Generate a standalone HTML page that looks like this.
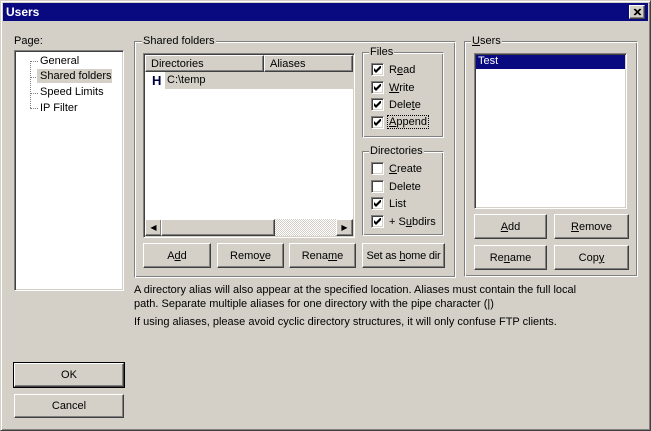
<!DOCTYPE html>
<html><head><style>
*{box-sizing:border-box;margin:0;padding:0}
body{width:651px;height:431px;background:#d4d0c8;font:11px "Liberation Sans",sans-serif;color:#000;position:relative;overflow:hidden}
.a{position:absolute}
.win{left:0;top:0;width:651px;height:431px;border:1px solid;border-color:#d4d0c8 #404040 #404040 #d4d0c8;box-shadow:inset 1px 1px #fff,inset -1px -1px #808080}
.title{left:3px;top:3px;width:645px;height:18px;background:#0a0a80;color:#fff;font-weight:bold;font-size:12px;padding:2px 0 0 3px}
.close{left:629px;top:5px;width:16px;height:14px;background:#d4d0c8;border:1px solid;border-color:#fff #404040 #404040 #fff;box-shadow:inset -1px -1px #808080}
.sunk{border:1px solid;border-color:#808080 #fff #fff #808080;box-shadow:inset 1px 1px #404040,inset -1px -1px #d4d0c8;background:#fff}
.grp{border:1px solid;border-color:#808080 #fff #fff #808080;box-shadow:inset 1px 1px #fff,inset -1px -1px #808080}
.gl{background:#d4d0c8;padding:0 1px}
.btn{border:1px solid;border-color:#fff #404040 #404040 #fff;box-shadow:inset -1px -1px #808080;background:#d4d0c8;text-align:center;display:flex;align-items:center;justify-content:center;white-space:pre}
.cb{width:13px;height:13px;border:1px solid;border-color:#808080 #fff #fff #808080;box-shadow:inset 1px 1px #404040,inset -1px -1px #d4d0c8;background:#fff}
.cb svg{position:absolute;left:2px;top:2px}
.lbl{white-space:nowrap;margin-top:1px}
u{text-decoration:underline}
.dot{border-top:1px dotted #808080;width:8px;height:0}
</style></head><body>
<div class="a win"></div>
<div class="a title">Users</div>
<div class="a close"><svg width="14" height="12" style="position:absolute;left:0;top:0"><path d="M4 3l6 6M5 3l6 6M10 3l-6 6M11 3l-6 6" stroke="#000" stroke-width="1"/></svg></div>

<div class="a lbl" style="left:14px;top:34px">Page:</div>
<div class="a sunk" style="left:14px;top:50px;width:110px;height:241px"></div>
<div class="a" style="left:30px;top:61px;height:47px;border-left:1px dotted #808080"></div>
<div class="a dot" style="left:30px;top:61px"></div>
<div class="a dot" style="left:30px;top:77px"></div>
<div class="a dot" style="left:30px;top:93px"></div>
<div class="a dot" style="left:30px;top:108px"></div>
<div class="a lbl" style="left:40px;top:54px">General</div>
<div class="a lbl" style="left:37px;top:68px;background:#d4d0c8;padding:1px 3px;width:75px">Shared folders</div>
<div class="a lbl" style="left:40px;top:85px">Speed Limits</div>
<div class="a lbl" style="left:40px;top:101px">IP Filter</div>

<div class="a grp" style="left:134px;top:41px;width:322px;height:237px"></div>
<div class="a lbl gl" style="left:142px;top:34px">Shared folders</div>
<div class="a sunk" style="left:143px;top:53px;width:212px;height:185px"></div>
<div class="a btn" style="left:145px;top:55px;width:119px;height:17px;justify-content:flex-start;padding-left:5px">Directories</div>
<div class="a btn" style="left:264px;top:55px;width:89px;height:17px;justify-content:flex-start;padding-left:5px">Aliases</div>
<div class="a" style="left:152px;top:73px;font-weight:bold;font-size:13px;color:#000040">H</div>
<div class="a lbl" style="left:165px;top:72px;width:188px;height:17px;background:#d4d0c8;padding:2px 2px;margin:0">C:\temp</div>
<div class="a" style="left:145px;top:219px;width:208px;height:17px;background:repeating-conic-gradient(#fff 0 25%,#d4d0c8 0 50%) 0 0/2px 2px"></div>
<div class="a btn" style="left:145px;top:219px;width:17px;height:17px;font-size:8px">◀</div>
<div class="a btn" style="left:161px;top:219px;width:114px;height:17px"></div>
<div class="a btn" style="left:336px;top:219px;width:17px;height:17px;font-size:8px">▶</div>

<div class="a grp" style="left:362px;top:52px;width:82px;height:86px"></div>
<div class="a lbl gl" style="left:369px;top:45px">Files</div>
<div class="a cb" style="left:371px;top:63px"><svg width="7" height="7"><path d="M0 2v3l2 2 5-5V-1L2 4z"/></svg></div><div class="a lbl" style="left:389px;top:63px">R<u>e</u>ad</div>
<div class="a cb" style="left:371px;top:81px"><svg width="7" height="7"><path d="M0 2v3l2 2 5-5V-1L2 4z"/></svg></div><div class="a lbl" style="left:389px;top:81px"><u>W</u>rite</div>
<div class="a cb" style="left:371px;top:98px"><svg width="7" height="7"><path d="M0 2v3l2 2 5-5V-1L2 4z"/></svg></div><div class="a lbl" style="left:389px;top:98px">Dele<u>t</u>e</div>
<div class="a cb" style="left:371px;top:116px"><svg width="7" height="7"><path d="M0 2v3l2 2 5-5V-1L2 4z"/></svg></div><div class="a lbl" style="left:388px;top:115px;outline:1px dotted #000;padding:0 1px"><u>A</u>ppend</div>
<div class="a grp" style="left:362px;top:151px;width:82px;height:85px"></div>
<div class="a lbl gl" style="left:369px;top:144px">Directories</div>
<div class="a cb" style="left:371px;top:162px"></div><div class="a lbl" style="left:389px;top:162px"><u>C</u>reate</div>
<div class="a cb" style="left:371px;top:180px"></div><div class="a lbl" style="left:389px;top:180px">Delete</div>
<div class="a cb" style="left:371px;top:197px"><svg width="7" height="7"><path d="M0 2v3l2 2 5-5V-1L2 4z"/></svg></div><div class="a lbl" style="left:389px;top:197px">List</div>
<div class="a cb" style="left:371px;top:215px"><svg width="7" height="7"><path d="M0 2v3l2 2 5-5V-1L2 4z"/></svg></div><div class="a lbl" style="left:389px;top:215px">+ S<u>u</u>bdirs</div>

<div class="a btn" style="left:143px;top:243px;width:68px;height:25px">A<u>d</u>d</div>
<div class="a btn" style="left:217px;top:243px;width:67px;height:25px">Remo<u>v</u>e</div>
<div class="a btn" style="left:289px;top:243px;width:67px;height:25px">Rena<u>m</u>e</div>
<div class="a btn" style="left:362px;top:243px;width:83px;height:25px;letter-spacing:-0.2px">Set as&nbsp;<u>h</u>ome dir</div>

<div class="a grp" style="left:464px;top:41px;width:174px;height:236px"></div>
<div class="a lbl gl" style="left:471px;top:34px"><u>U</u>sers</div>
<div class="a sunk" style="left:474px;top:53px;width:153px;height:156px"></div>
<div class="a" style="left:476px;top:55px;width:149px;height:14px;background:#0a0a80;color:#fff;padding:0 2px">Test</div>
<div class="a btn" style="left:474px;top:214px;width:73px;height:25px"><u>A</u>dd</div>
<div class="a btn" style="left:554px;top:214px;width:75px;height:25px"><u>R</u>emove</div>
<div class="a btn" style="left:474px;top:245px;width:73px;height:25px">Re<u>n</u>ame</div>
<div class="a btn" style="left:554px;top:245px;width:75px;height:25px">Cop<u>y</u></div>

<div class="a lbl" style="left:134px;top:282px;line-height:14px">A directory alias will also appear at the specified location. Aliases must contain the full local<br>path. Separate multiple aliases for one directory with the pipe character (|)</div>
<div class="a lbl" style="left:134px;top:315px">If using aliases, please avoid cyclic directory structures, it will only confuse FTP clients.</div>

<div class="a btn" style="left:14px;top:363px;width:110px;height:24px;outline:1px solid #000">OK</div>
<div class="a btn" style="left:14px;top:394px;width:110px;height:24px">Cancel</div>
</body></html>
